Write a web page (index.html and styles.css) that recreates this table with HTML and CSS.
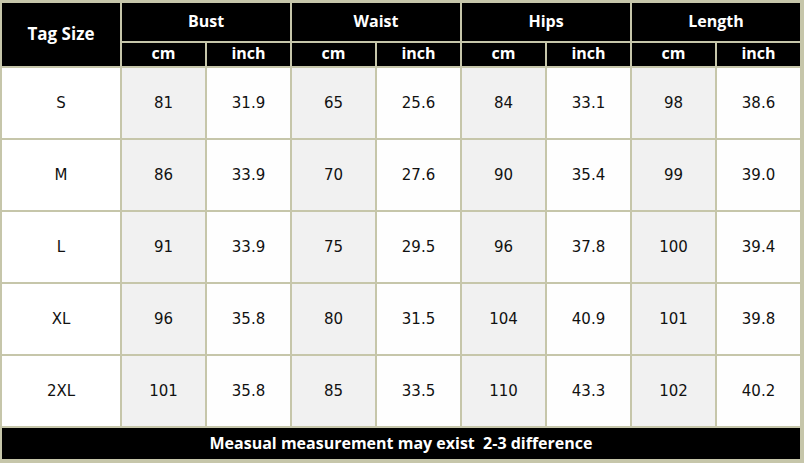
FILE: index.html
```html
<!DOCTYPE html>
<html>
<head>
<meta charset="utf-8">
<link rel="stylesheet" href="styles.css">
</head>
<body>
<div class="chart">
  <div class="hd tag">Tag Size</div>
  <div class="hd grp">Bust</div>
  <div class="hd grp">Waist</div>
  <div class="hd grp">Hips</div>
  <div class="hd grp">Length</div>
  <div class="hd sub">cm</div><div class="hd sub">inch</div>
  <div class="hd sub">cm</div><div class="hd sub">inch</div>
  <div class="hd sub">cm</div><div class="hd sub">inch</div>
  <div class="hd sub">cm</div><div class="hd sub">inch</div>

  <div class="c sz">S</div><div class="c cm">81</div><div class="c in">31.9</div><div class="c cm">65</div><div class="c in">25.6</div><div class="c cm">84</div><div class="c in">33.1</div><div class="c cm">98</div><div class="c in">38.6</div>
  <div class="c sz">M</div><div class="c cm">86</div><div class="c in">33.9</div><div class="c cm">70</div><div class="c in">27.6</div><div class="c cm">90</div><div class="c in">35.4</div><div class="c cm">99</div><div class="c in">39.0</div>
  <div class="c sz">L</div><div class="c cm">91</div><div class="c in">33.9</div><div class="c cm">75</div><div class="c in">29.5</div><div class="c cm">96</div><div class="c in">37.8</div><div class="c cm">100</div><div class="c in">39.4</div>
  <div class="c sz">XL</div><div class="c cm">96</div><div class="c in">35.8</div><div class="c cm">80</div><div class="c in">31.5</div><div class="c cm">104</div><div class="c in">40.9</div><div class="c cm">101</div><div class="c in">39.8</div>
  <div class="c sz">2XL</div><div class="c cm">101</div><div class="c in">35.8</div><div class="c cm">85</div><div class="c in">33.5</div><div class="c cm">110</div><div class="c in">43.3</div><div class="c cm">102</div><div class="c in">40.2</div>

  <div class="hd foot">Measual measurement may exist&nbsp; 2-3 difference</div>
</div>
</body>
</html>
```
FILE: styles.css
```css
html, body {
  margin: 0;
  padding: 0;
  background: #ffffff;
}
.chart {
  width: 804px;
  height: 463px;
  box-sizing: border-box;
  padding: 3px 2px 4px 2px;
  background: #c6c6aa;
  display: grid;
  grid-template-columns: 118px repeat(8, 83px);
  grid-template-rows: 38px 23px repeat(5, 70px) 31px;
  gap: 2px;
}
.hd {
  background: #000000;
  color: #ffffff;
  font-family: "Open Sans", "DejaVu Sans", sans-serif;
  font-weight: 700;
  display: flex;
  align-items: center;
  justify-content: center;
  padding-bottom: 3px;
  box-sizing: border-box;
}
.tag {
  grid-row: 1 / span 2;
  font-size: 17px;
}
.grp {
  grid-column: span 2;
  font-size: 16px;
}
.sub {
  font-size: 16px;
}
.foot {
  grid-column: 1 / -1;
  font-size: 16px;
  white-space: pre;
  padding-bottom: 2px;
}
.c {
  display: flex;
  align-items: center;
  justify-content: center;
  font-family: "DejaVu Sans", sans-serif;
  font-size: 15px;
  color: #111111;
}
.sz { background: #ffffff; }
.cm { background: #f1f1f1; }
.in { background: #fefefe; }
```
